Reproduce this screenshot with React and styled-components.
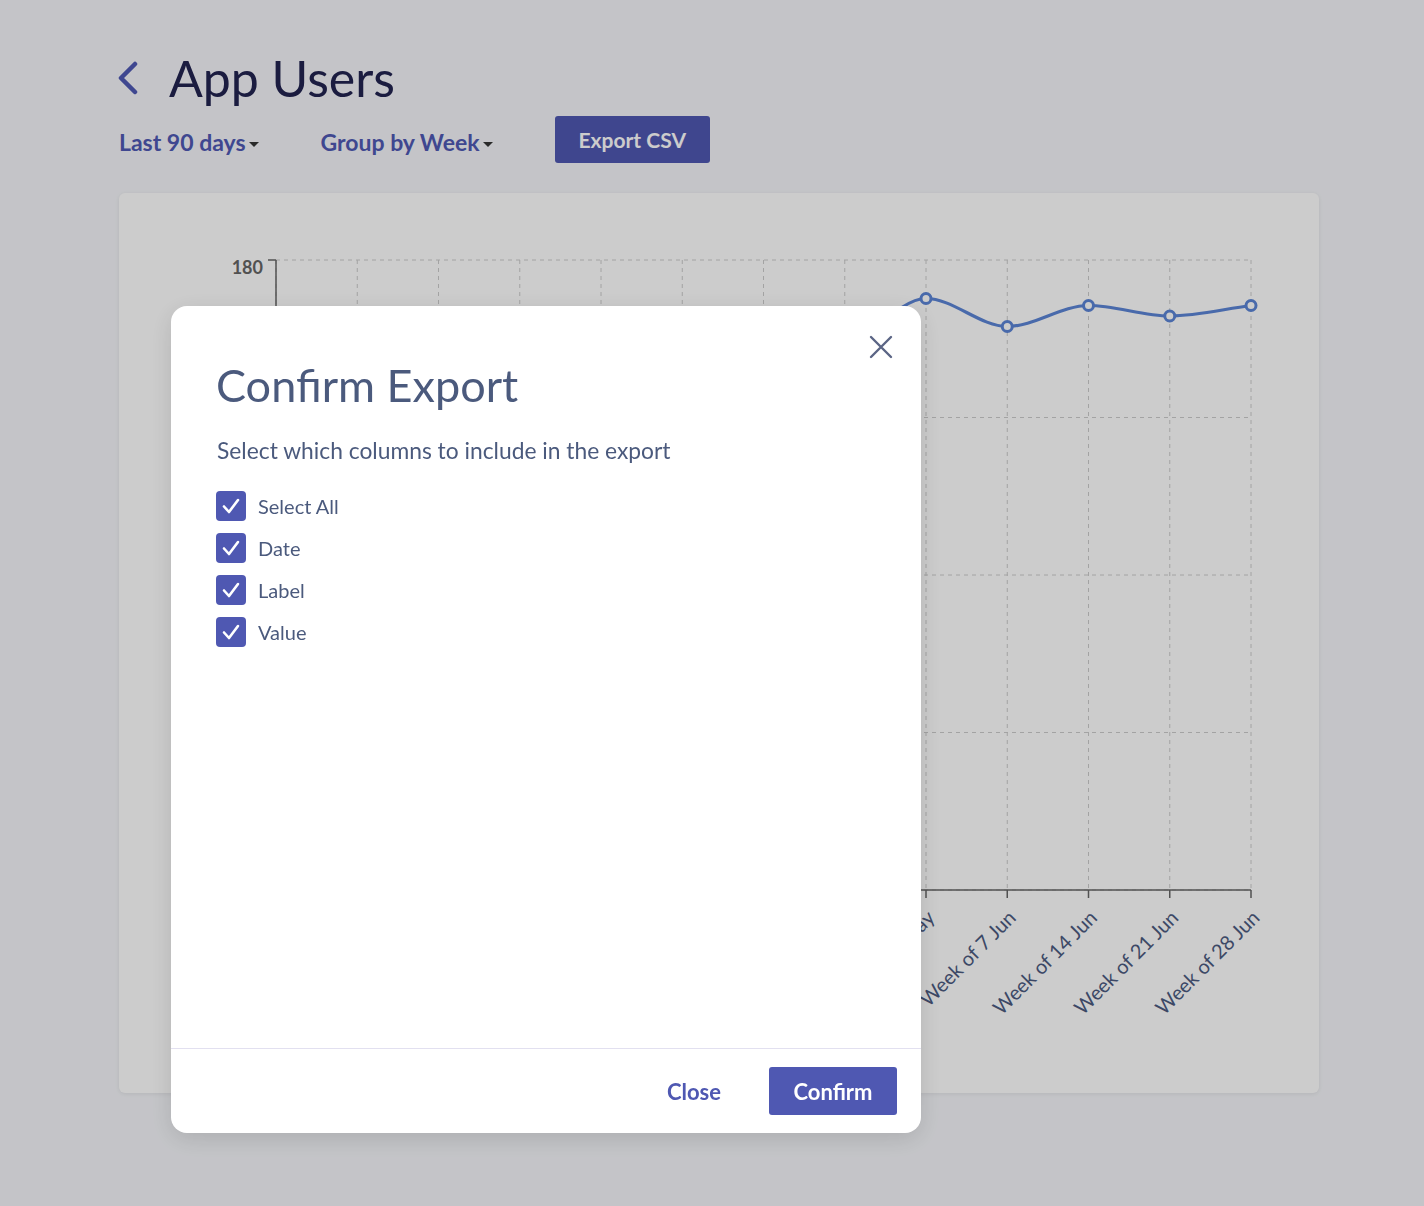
import React, { useState } from 'react';
import styled, { createGlobalStyle } from 'styled-components';

const FONT = `Lato, "Liberation Sans", sans-serif`;

const GlobalStyle = createGlobalStyle`
  * { box-sizing: border-box; }
  body {
    margin: 0;
    background: #f5f6fa;
    font-family: ${FONT};
  }
`;

// chart geometry, in card coordinates
const PLOT = { left: 157, right: 1132, top: 67, bottom: 697 };
const Y_MAX = 180;
const Y_TICKS = [0, 45, 90, 135, 180];
const WEEKS = [
  '5 Apr', '12 Apr', '19 Apr', '26 Apr', '3 May', '10 May', '17 May',
  '24 May', '31 May', '7 Jun', '14 Jun', '21 Jun', '28 Jun',
];
const VALUES = [95, 110, 124, 137, 149, 146, 150, 154, 169, 161, 167, 164, 167];
const COLUMNS = ['Select All', 'Date', 'Label', 'Value'];

const xAt = (i) => PLOT.left + (i * (PLOT.right - PLOT.left)) / (WEEKS.length - 1);
const yAt = (v) => PLOT.bottom - (v / Y_MAX) * (PLOT.bottom - PLOT.top);

// monotone cubic curve through the points
function monotonePath(pts) {
  const n = pts.length;
  const d = [];
  const m = [];
  for (let i = 0; i < n - 1; i++) {
    d.push((pts[i + 1][1] - pts[i][1]) / (pts[i + 1][0] - pts[i][0]));
  }
  m[0] = d[0];
  m[n - 1] = d[n - 2];
  for (let i = 1; i < n - 1; i++) {
    m[i] = d[i - 1] * d[i] <= 0 ? 0 : (d[i - 1] + d[i]) / 2;
  }
  let path = `M${pts[0][0]},${pts[0][1]}`;
  for (let i = 0; i < n - 1; i++) {
    const [x0, y0] = pts[i];
    const [x1, y1] = pts[i + 1];
    const h = (x1 - x0) / 3;
    path += ` C${x0 + h},${y0 + m[i] * h} ${x1 - h},${y1 - m[i + 1] * h} ${x1},${y1}`;
  }
  return path;
}

function Chart() {
  const pts = VALUES.map((v, i) => [xAt(i), yAt(v)]);
  return (
    <svg width="1200" height="900" viewBox="0 0 1200 900">
      <g stroke="#cccccc" strokeDasharray="4 4" fill="none">
        {Y_TICKS.map((t) => (
          <line key={t} x1={PLOT.left} x2={PLOT.right} y1={yAt(t)} y2={yAt(t)} />
        ))}
        {WEEKS.map((w, i) => (
          <line key={w} x1={xAt(i)} x2={xAt(i)} y1={PLOT.top} y2={PLOT.bottom} />
        ))}
      </g>
      <g stroke="#666" strokeWidth="1.5" fill="none">
        <line x1={PLOT.left} x2={PLOT.left} y1={PLOT.top} y2={PLOT.bottom} />
        <line x1={PLOT.left} x2={PLOT.right} y1={PLOT.bottom} y2={PLOT.bottom} />
        {Y_TICKS.map((t) => (
          <line key={t} x1={PLOT.left - 8} x2={PLOT.left} y1={yAt(t)} y2={yAt(t)} />
        ))}
        {WEEKS.map((w, i) => (
          <line key={w} x1={xAt(i)} x2={xAt(i)} y1={PLOT.bottom} y2={PLOT.bottom + 8} />
        ))}
      </g>
      <g fill="#666" fontFamily={FONT} fontSize="18" fontWeight="700" textAnchor="end">
        {Y_TICKS.map((t) => (
          <text key={t} x={PLOT.left - 13} y={yAt(t) + 14}>
            {t}
          </text>
        ))}
      </g>
      <g fill="#4c5a80" fontFamily={FONT} fontSize="20" textAnchor="end">
        {WEEKS.map((w, i) => {
          const x = xAt(i) + 10;
          const y = PLOT.bottom + 29;
          return (
            <text key={w} x={x} y={y} transform={`rotate(-45 ${x} ${y})`}>
              Week of {w}
            </text>
          );
        })}
      </g>
      <path d={monotonePath(pts)} fill="none" stroke="#5c85d6" strokeWidth="3.2" />
      {pts.map(([x, y], i) => (
        <circle key={i} cx={x} cy={y} r="5" fill="#fff" stroke="#5c85d6" strokeWidth="3" />
      ))}
    </svg>
  );
}

function Checkbox({ checked }) {
  return (
    <Box $checked={checked}>
      {checked && (
        <svg width="22" height="22" viewBox="0 0 22 22" fill="none">
          <path d="M4 11.5l5 5.5 9-12" stroke="#fff" strokeWidth="2.6" strokeLinecap="round" strokeLinejoin="round" />
        </svg>
      )}
    </Box>
  );
}

export default function App() {
  const [checked, setChecked] = useState({ 'Select All': true, Date: true, Label: true, Value: true });

  return (
    <>
      <GlobalStyle />
      <Page>
        <Header>
          <BackButton aria-label="Back">
            <svg width="22" height="34" viewBox="0 0 22 34" fill="none">
              <path d="M18 3L4 17l14 14" stroke="#4f59b4" strokeWidth="4.5" strokeLinecap="round" strokeLinejoin="round" />
            </svg>
          </BackButton>
          <Title>App Users</Title>
        </Header>
        <Controls>
          <Dropdown>
            Last 90 days<Caret />
          </Dropdown>
          <Dropdown>
            Group by Week<Caret />
          </Dropdown>
          <PrimaryButton $size="lg">Export CSV</PrimaryButton>
        </Controls>
        <Card>
          <Chart />
        </Card>
      </Page>

      <Overlay />
      <Modal role="dialog">
        <CloseIcon aria-label="Close">
          <svg width="24" height="24" viewBox="0 0 24 24" fill="none">
            <path d="M2 2l20 20M22 2L2 22" stroke="#5b6585" strokeWidth="2.4" strokeLinecap="round" />
          </svg>
        </CloseIcon>
        <ModalBody>
          <ModalTitle>Confirm Export</ModalTitle>
          <ModalText>Select which columns to include in the export</ModalText>
          <CheckList>
            {COLUMNS.map((c) => (
              <CheckRow key={c} onClick={() => setChecked({ ...checked, [c]: !checked[c] })}>
                <Checkbox checked={checked[c]} />
                <span>{c}</span>
              </CheckRow>
            ))}
          </CheckList>
        </ModalBody>
        <ModalFooter>
          <TextButton>Close</TextButton>
          <PrimaryButton>Confirm</PrimaryButton>
        </ModalFooter>
      </Modal>
    </>
  );
}

const Page = styled.div`
  min-height: 100vh;
  padding: 50px 105px 80px 119px;
`;

const Header = styled.div`
  display: flex;
  align-items: center;
  gap: 30px;
  height: 56px;
`;

const BackButton = styled.button`
  display: flex;
  background: none;
  border: 0;
  padding: 0;
  margin-left: -2px;
  cursor: pointer;
`;

const Title = styled.h1`
  margin: 0;
  font-size: 50px;
  font-weight: 400;
  line-height: 1;
  color: #222350;
`;

const Controls = styled.div`
  display: flex;
  align-items: center;
  gap: 62px;
  margin-top: 10px;
`;

const Dropdown = styled.button`
  display: flex;
  align-items: center;
  background: none;
  border: 0;
  padding: 5px 0 0;
  font-family: ${FONT};
  font-size: 23px;
  font-weight: 700;
  color: #4f59b4;
  cursor: pointer;
`;

const Caret = styled.span`
  width: 0;
  height: 0;
  margin: 5px 0 0 3px;
  border-left: 5px solid transparent;
  border-right: 5px solid transparent;
  border-top: 5px solid #353535;
`;

const PrimaryButton = styled.button`
  display: flex;
  align-items: center;
  justify-content: center;
  height: ${(p) => (p.$size === 'lg' ? '47px' : '48px')};
  padding: 0 24px;
  border: 0;
  border-radius: 3px;
  background: #4f58b2;
  color: #fff;
  font-family: ${FONT};
  font-size: 21px;
  font-weight: 700;
  cursor: pointer;
`;

const Card = styled.div`
  margin-top: 30px;
  width: 1200px;
  height: 900px;
  background: #fff;
  border-radius: 6px;
  box-shadow: 0 1px 4px rgba(0, 0, 0, 0.08);
  overflow: hidden;

  svg {
    display: block;
  }
`;

const Overlay = styled.div`
  position: fixed;
  inset: 0;
  background: rgba(0, 0, 0, 0.2);
`;

const Modal = styled.div`
  position: fixed;
  left: 171px;
  top: 306px;
  width: 750px;
  height: 827px;
  display: flex;
  flex-direction: column;
  background: #fff;
  border-radius: 16px;
  box-shadow: 0 6px 24px rgba(0, 0, 0, 0.12);
`;

const CloseIcon = styled.button`
  position: absolute;
  top: 29px;
  right: 28px;
  display: flex;
  background: none;
  border: 0;
  padding: 0;
  cursor: pointer;
`;

const ModalBody = styled.div`
  flex: 1;
  padding: 57px 46px 0 45px;
`;

const ModalTitle = styled.h2`
  margin: 0;
  font-size: 45px;
  font-weight: 400;
  line-height: 1;
  color: #4b5a7d;
`;

const ModalText = styled.p`
  margin: 29px 0 0 1px;
  font-size: 22.8px;
  line-height: 1.2;
  color: #4b5a7d;
`;

const CheckList = styled.div`
  display: flex;
  flex-direction: column;
  gap: 12px;
  margin-top: 27px;
`;

const CheckRow = styled.label`
  display: flex;
  align-items: center;
  gap: 12px;
  font-size: 20px;
  color: #4b5a7d;
  cursor: pointer;
`;

const Box = styled.span`
  display: flex;
  align-items: center;
  justify-content: center;
  width: 30px;
  height: 30px;
  border-radius: 4px;
  background: ${(p) => (p.$checked ? '#4f58b2' : '#fff')};
  border: ${(p) => (p.$checked ? '0' : '2px solid #4f58b2')};
`;

const ModalFooter = styled.div`
  display: flex;
  justify-content: flex-end;
  align-items: center;
  gap: 48px;
  height: 85px;
  padding: 0 24px 0 0;
  border-top: 1px solid #e2e0f0;

  ${PrimaryButton} {
    width: 128px;
    padding: 0;
    font-size: 22px;
  }
`;

const TextButton = styled.button`
  background: none;
  border: 0;
  padding: 0;
  font-family: ${FONT};
  font-size: 22px;
  font-weight: 700;
  color: #4f58b2;
  cursor: pointer;
`;
